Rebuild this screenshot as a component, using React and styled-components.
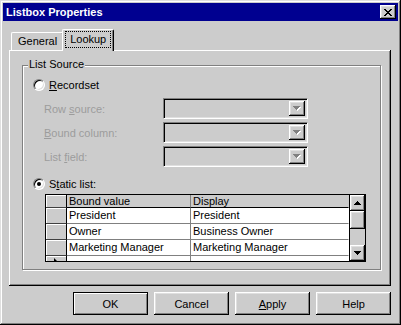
import React from 'react'
import styled, { createGlobalStyle } from 'styled-components'

const GlobalStyle = createGlobalStyle`
  html, body { margin: 0; padding: 0; background: #cccccc; }
  body {
    font-family: "Liberation Sans", Arial, sans-serif;
    font-size: 11px;
    color: #000;
  }
  * { box-sizing: border-box; }
`

const raised = `
  box-shadow: inset -1px -1px #000, inset 1px 1px #fff,
    inset -2px -2px #808080, inset 2px 2px #dfdfdf;
`

const Window = styled.div`
  width: 401px;
  height: 325px;
  padding: 3px;
  background: #cccccc;
  box-shadow: inset -1px -1px #000, inset 1px 1px #dfdfdf,
    inset -2px -2px #808080, inset 2px 2px #fff;
  display: flex;
  flex-direction: column;
`

const TitleBar = styled.div`
  height: 18px;
  background: #000090;
  color: #fff;
  font-weight: bold;
  display: flex;
  align-items: center;
  justify-content: space-between;
  padding: 0 2px 0 3px;
`

const CloseButton = styled.div`
  width: 16px;
  height: 14px;
  background: #cccccc;
  ${raised}
  display: flex;
  align-items: center;
  justify-content: center;
  padding-right: 1px;
`

const Body = styled.div`
  flex: 1;
  display: flex;
  flex-direction: column;
  padding: 8px 7px 0 6px;
`

const TabStrip = styled.div`
  height: 21px;
  display: flex;
  align-items: flex-end;
  padding-left: 2px;
`

const Tab = styled.div`
  position: relative;
  background: #cccccc;
  border-top: 1px solid #fff;
  border-left: 1px solid #fff;
  border-right: 1px solid #000;
  border-radius: 2px 2px 0 0;
  box-shadow: inset -1px 0 #808080;
  display: flex;
  justify-content: center;
  height: ${p => (p.$active ? '22px' : '18px')};
  margin: ${p => (p.$active ? '0 -2px -1px' : '0')};
  padding: ${p => (p.$active ? '1px 2px 0' : '2px 6px 0')};
  z-index: ${p => (p.$active ? 1 : 0)};
`

const FocusLabel = styled.span`
  height: 17px;
  line-height: 15px;
  padding: 0 4px;
  border: 1px dotted #000;
`

const Panel = styled.div`
  height: 236px;
  padding: 15px 0 0 13px;
  box-shadow: inset -1px -1px #000, inset 1px 1px #fff, inset -2px -2px #808080;
`

const GroupBox = styled.div`
  position: relative;
  width: 359px;
  height: 205px;
  border: 1px solid #808080;
  box-shadow: inset 1px 1px #fff, 1px 1px #fff;
  padding: 11px 0 0 10px;
  display: flex;
  flex-direction: column;
`

const Legend = styled.span`
  position: absolute;
  top: -8px;
  left: 5px;
  padding: 0 1px;
  line-height: 13px;
  background: #cccccc;
`

const RadioRow = styled.label`
  height: 16px;
  display: flex;
  align-items: center;
  gap: 4px;
  margin-top: ${p => p.$gap || 0}px;
`

const Radio = styled.span`
  width: 12px;
  height: 12px;
  border-radius: 50%;
  background: #fff;
  border: 1px solid;
  border-color: #808080 #fff #fff #808080;
  box-shadow: inset 1px 1px #000, inset -1px -1px #dfdfdf;
  display: flex;
  align-items: center;
  justify-content: center;
  &::after {
    content: '';
    width: 4px;
    height: 4px;
    border-radius: 50%;
    background: ${p => (p.$checked ? '#000' : 'transparent')};
  }
`

const FieldRow = styled.div`
  height: 21px;
  display: flex;
  align-items: center;
  margin-top: ${p => p.$gap}px;
  padding-left: 11px;
`

const FieldLabel = styled.span`
  width: 119px;
  color: #9c9c9c;
`

const Combo = styled.div`
  width: 145px;
  height: 21px;
  border: 1px solid;
  border-color: #808080 #fff #fff #808080;
  box-shadow: inset 1px 1px #000, inset -1px -1px #dfdfdf;
  display: flex;
  justify-content: flex-end;
  padding: 2px;
`

const DropButton = styled.div`
  width: 16px;
  height: 15px;
  ${raised}
  display: flex;
  align-items: center;
  justify-content: center;
`

const Grid = styled.div`
  margin: 2px 0 0 12px;
  width: 321px;
  height: 68px;
  border: 1px solid #000;
  display: flex;
  background: #fff;
  overflow: hidden;
`

const Table = styled.div`
  flex: 1;
  display: grid;
  grid-template-columns: 21px 124px 1fr;
  grid-auto-rows: 16px;
  grid-template-rows: 13px;
  align-content: start;
`

const Cell = styled.div`
  border-right: 1px solid ${p => (p.$last ? 'transparent' : '#808080')};
  border-bottom: 1px solid ${p => (p.$head ? '#000' : '#808080')};
  background: ${p => (p.$head ? '#cccccc' : '#fff')};
  padding-left: 2px;
  line-height: 15px;
  white-space: nowrap;
  overflow: hidden;
  ${p => p.$head && 'line-height: 12px;'}
`

const Selector = styled.div`
  position: relative;
  background: #cccccc;
  border-right: 1px solid #000;
  border-bottom: 1px solid #404040;
  box-shadow: inset 1px 1px #fff;
`

const NewRowMark = styled.span`
  position: absolute;
  left: 8px;
  top: 2px;
  width: 0;
  height: 0;
  border-left: 3px solid #000;
  border-top: 3px solid transparent;
  border-bottom: 3px solid transparent;
`

const ScrollBar = styled.div`
  width: 16px;
  display: flex;
  flex-direction: column;
  background: #cccccc;
  border-left: 1px solid #000;
`

const ScrollPart = styled.div`
  height: ${p => p.$h}px;
  flex: ${p => (p.$grow ? 1 : 'none')};
  ${p => !p.$grow && raised}
  display: flex;
  align-items: center;
  justify-content: center;
`

const ButtonRow = styled.div`
  margin-top: 6px;
  display: flex;
  justify-content: flex-end;
  gap: 6px;
`

const Button = styled.div`
  width: 75px;
  height: 23px;
  display: flex;
  align-items: center;
  justify-content: center;
  ${p =>
    p.$default
      ? 'border: 1px solid #000; box-shadow: inset 1px 1px #fff, inset -1px -1px #808080;'
      : raised}
`

const CloseGlyph = () => (
  <svg width="8" height="7" viewBox="0 0 8 7" shapeRendering="crispEdges">
    <path d="M0 0h2v1h1v1h2V1h1V0h2v1H7v1H6v1H5v1h1v1h1v1h1v1H6V6H5V5H3v1H2v1H0V6h1V5h1V4h1V3H2V2H1V1H0z" fill="#000" />
  </svg>
)

const Arrow = ({ up, color = '#000', shadow }) => (
  <svg width="8" height="5" viewBox="0 0 8 5" shapeRendering="crispEdges">
    {shadow && <path d={up ? 'M4 1L8 5H1z' : 'M1 1h7L4 5z'} fill="#fff" />}
    <path d={up ? 'M3.5 0L7 4H0z' : 'M0 0h7L3.5 4z'} fill={color} />
  </svg>
)

const rows = [
  ['President', 'President'],
  ['Owner', 'Business Owner'],
  ['Marketing Manager', 'Marketing Manager'],
]

const fields = [
  ['Row ', 's', 'ource:'],
  ['', 'B', 'ound column:'],
  ['List ', 'f', 'ield:'],
]

export default function App() {
  return (
    <>
      <GlobalStyle />
      <Window>
        <TitleBar>
          <span>Listbox Properties</span>
          <CloseButton>
            <CloseGlyph />
          </CloseButton>
        </TitleBar>
        <Body>
          <TabStrip>
            <Tab>General</Tab>
            <Tab $active>
              <FocusLabel>Lookup</FocusLabel>
            </Tab>
          </TabStrip>
          <Panel>
            <GroupBox>
              <Legend>List Source</Legend>
              <RadioRow>
                <Radio />
                <span>
                  <u>R</u>ecordset
                </span>
              </RadioRow>
              {fields.map(([a, k, b], i) => (
                <FieldRow key={i} $gap={i === 0 ? 5 : 3}>
                  <FieldLabel>
                    {a}
                    <u>{k}</u>
                    {b}
                  </FieldLabel>
                  <Combo>
                    <DropButton>
                      <Arrow color="#808080" shadow />
                    </DropButton>
                  </Combo>
                </FieldRow>
              ))}
              <RadioRow $gap={9}>
                <Radio $checked />
                <span>
                  S<u>t</u>atic list:
                </span>
              </RadioRow>
              <Grid>
                <Table>
                  <Selector />
                  <Cell $head>Bound value</Cell>
                  <Cell $head $last>Display</Cell>
                  {rows.map(([a, b]) => (
                    <React.Fragment key={a}>
                      <Selector />
                      <Cell>{a}</Cell>
                      <Cell $last>{b}</Cell>
                    </React.Fragment>
                  ))}
                  <Selector>
                    <NewRowMark />
                  </Selector>
                  <Cell />
                  <Cell $last />
                </Table>
                <ScrollBar>
                  <ScrollPart $h={16}>
                    <Arrow up />
                  </ScrollPart>
                  <ScrollPart $h={18} />
                  <ScrollPart $grow />
                  <ScrollPart $h={16}>
                    <Arrow />
                  </ScrollPart>
                </ScrollBar>
              </Grid>
            </GroupBox>
          </Panel>
          <ButtonRow>
            <Button $default>OK</Button>
            <Button>Cancel</Button>
            <Button>
              <span>
                <u>A</u>pply
              </span>
            </Button>
            <Button>Help</Button>
          </ButtonRow>
        </Body>
      </Window>
    </>
  )
}
